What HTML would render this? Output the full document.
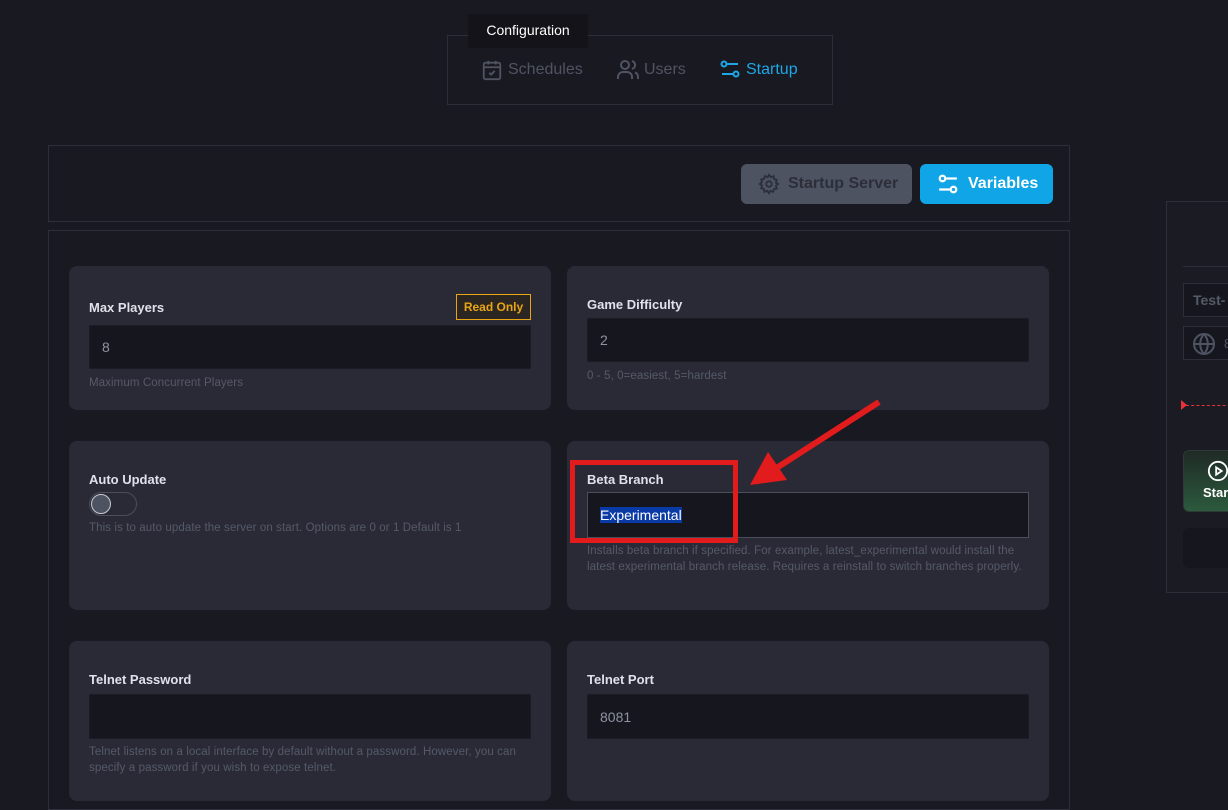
<!DOCTYPE html>
<html><head><style>
*{box-sizing:border-box;margin:0;padding:0}
body{width:1228px;height:784px;overflow:hidden;background:#191921;font-family:"Liberation Sans",sans-serif;position:relative;color:#d8dbe4}
.abs{position:absolute}
.card{position:absolute;background:#2a2a37;border-radius:8px}
.lbl{position:absolute;font-size:13px;font-weight:bold;color:#dfe2ea}
.inp{position:absolute;background:#16161e;border:1px solid #1c1c25;font-size:14px;color:#8d93a0;padding-left:12px;display:flex;align-items:center}
.hint{position:absolute;font-size:11.5px;color:#555a68;line-height:16px;letter-spacing:0.1px}
</style></head><body>
<div class="abs" style="left:447px;top:35px;width:386px;height:70px;border:1px solid #2e2e3a"></div>
<div class="abs" style="left:468px;top:14px;width:120px;height:34px;background:#131319;color:#fff;font-size:14px;text-align:center;line-height:32px">Configuration</div>
<svg class="abs" style="left:481px;top:58px" width="22" height="24" viewBox="0 0 24 24" fill="none" stroke="#4f5462" stroke-width="2"><rect x="3" y="4" width="18" height="18" rx="2"/><path d="M3 9h18M8 2v4M16 2v4M9 15l2 2 4-4"/></svg>
<div class="abs" style="left:508px;top:61px;font-size:16px;color:#4f5462">Schedules</div>
<svg class="abs" style="left:616px;top:58px" width="24" height="24" viewBox="0 0 24 24" fill="none" stroke="#4f5462" stroke-width="2"><circle cx="9" cy="7" r="4"/><path d="M2 21v-2a5 5 0 0 1 5-5h4a5 5 0 0 1 5 5v2M16 3.1a4 4 0 0 1 0 7.8M22 21v-2a5 5 0 0 0-3-4.6"/></svg>
<div class="abs" style="left:644px;top:61px;font-size:16px;color:#4f5462">Users</div>
<svg class="abs" style="left:720px;top:59px" width="20" height="20" viewBox="0 0 20 20" fill="none" stroke="#1ea6e6" stroke-width="2"><circle cx="4" cy="5" r="2.5"/><path d="M7 5h11M2 15h11"/><circle cx="16" cy="15" r="2.5"/></svg>
<div class="abs" style="left:746px;top:61px;font-size:16px;color:#1ea6e6">Startup</div>

<div class="abs" style="left:48px;top:145px;width:1022px;height:77px;border:1px solid #2e2e3a"></div>
<div class="abs" style="left:741px;top:164px;width:171px;height:40px;background:#4e5362;border-radius:6px"></div>
<svg class="abs" style="left:758px;top:173px" width="22" height="22" viewBox="0 0 24 24" fill="none" stroke="#2c2e39" stroke-width="2"><circle cx="12" cy="12" r="3"/><path d="M12 2l2 2.5 3-1 .5 3 3 1-1 3L22 12l-2.5 2 1 3-3 .5-1 3-3-1L12 22l-2-2.5-3 1-.5-3-3-1 1-3L2 12l2.5-2-1-3 3-.5 1-3 3 1z"/></svg>
<div class="abs" style="left:788px;top:175px;font-size:16px;font-weight:bold;color:#2c2e39">Startup Server</div>
<div class="abs" style="left:920px;top:164px;width:133px;height:40px;background:#10a5e6;border-radius:6px"></div>
<svg class="abs" style="left:937px;top:173px" width="22" height="22" viewBox="0 0 20 20" fill="none" stroke="#fff" stroke-width="2"><circle cx="5" cy="5" r="2.5"/><path d="M8 5h10M2 15h10"/><circle cx="15" cy="15" r="2.5"/></svg>
<div class="abs" style="left:968px;top:175px;font-size:16px;font-weight:bold;color:#fff">Variables</div>

<div class="abs" style="left:48px;top:230px;width:1022px;height:580px;border:1px solid #2e2e3a"></div>

<div class="card" style="left:69px;top:266px;width:482px;height:144px"></div>
<div class="lbl" style="left:89px;top:300px">Max Players</div>
<div class="abs" style="left:456px;top:294px;width:75px;height:26px;border:1px solid #e9a514;background:#2b2622;color:#e9a514;font-size:12px;font-weight:bold;text-align:center;line-height:24px">Read Only</div>
<div class="inp" style="left:89px;top:325px;width:442px;height:44px">8</div>
<div class="hint" style="left:89px;top:375px">Maximum Concurrent Players</div>

<div class="card" style="left:567px;top:266px;width:482px;height:144px"></div>
<div class="lbl" style="left:587px;top:297px">Game Difficulty</div>
<div class="inp" style="left:587px;top:318px;width:442px;height:44px">2</div>
<div class="hint" style="left:587px;top:368px">0 - 5, 0=easiest, 5=hardest</div>

<div class="card" style="left:69px;top:441px;width:482px;height:169px"></div>
<div class="lbl" style="left:89px;top:472px">Auto Update</div>
<div class="abs" style="left:89px;top:492px;width:48px;height:24px;border:1px solid #4a4e5a;border-radius:12px"></div>
<div class="abs" style="left:91px;top:494px;width:20px;height:20px;border-radius:50%;background:#4e5362;border:1.5px solid #c8ccd4"></div>
<div class="hint" style="left:89px;top:520px">This is to auto update the server on start. Options are 0 or 1 Default is 1</div>

<div class="card" style="left:567px;top:441px;width:482px;height:169px"></div>
<div class="lbl" style="left:587px;top:472px">Beta Branch</div>
<div class="inp" style="left:587px;top:492px;width:442px;height:46px;border-color:#4a4e5a"><span style="background:#0a3aa6;color:#fff">Experimental</span></div>
<div class="hint" style="left:587px;top:543px;width:440px">Installs beta branch if specified. For example, latest_experimental would install the latest experimental branch release. Requires a reinstall to switch branches properly.</div>

<div class="card" style="left:69px;top:641px;width:482px;height:160px"></div>
<div class="lbl" style="left:89px;top:672px">Telnet Password</div>
<div class="inp" style="left:89px;top:694px;width:442px;height:45px"></div>
<div class="hint" style="left:89px;top:744px;width:438px">Telnet listens on a local interface by default without a password. However, you can specify a password if you wish to expose telnet.</div>

<div class="card" style="left:567px;top:641px;width:482px;height:160px"></div>
<div class="lbl" style="left:587px;top:672px">Telnet Port</div>
<div class="inp" style="left:587px;top:694px;width:442px;height:45px">8081</div>

<div class="abs" style="left:1166px;top:201px;width:80px;height:392px;border:1px solid #2e2e3a;background:#1b1b23"></div>
<div class="abs" style="left:1183px;top:266px;width:60px;height:1px;background:#2e2e3a"></div>
<div class="abs" style="left:1183px;top:283px;width:60px;height:34px;border:1px solid #2e2e3a;background:#16161e;color:#555a68;font-size:14px;font-weight:bold;padding:8px 0 0 9px">Test-</div>
<div class="abs" style="left:1183px;top:326px;width:60px;height:34px;border:1px solid #2e2e3a;background:#16161e"></div>
<svg class="abs" style="left:1192px;top:332px" width="24" height="24" viewBox="0 0 24 24" fill="none" stroke="#4f5462" stroke-width="2"><circle cx="12" cy="12" r="10"/><path d="M2 12h20M12 2a15 15 0 0 1 0 20M12 2a15 15 0 0 0 0 20"/></svg>
<div class="abs" style="left:1224px;top:336px;font-size:13px;color:#4f5462">8</div>
<div class="abs" style="left:1181px;top:400px;width:0;height:0;border-top:5px solid transparent;border-bottom:5px solid transparent;border-left:6px solid #e8333a"></div>
<div class="abs" style="left:1186px;top:405px;width:50px;border-top:1px dashed #e8333a"></div>
<div class="abs" style="left:1183px;top:450px;width:60px;height:62px;border-radius:6px;background:linear-gradient(#1f2a25,#2c5a3e);border:1px solid #2e3a33"></div>
<svg class="abs" style="left:1207px;top:460px" width="22" height="22" viewBox="0 0 24 24" fill="none" stroke="#fff" stroke-width="2"><circle cx="12" cy="12" r="10"/><path d="M10 8l6 4-6 4z"/></svg>
<div class="abs" style="left:1203px;top:485px;font-size:13px;font-weight:bold;color:#fff">Star</div>
<div class="abs" style="left:1183px;top:528px;width:60px;height:40px;border-radius:6px;background:#16161e"></div>

<div class="abs" style="left:570px;top:460px;width:168px;height:83px;border:5px solid #e21c1c"></div>
<svg class="abs" style="left:0;top:0" width="1228" height="784"><line x1="879" y1="402" x2="775" y2="469" stroke="#e21c1c" stroke-width="6"/><polygon points="750,485 768,452 787,480" fill="#e21c1c"/></svg>
</body></html>
